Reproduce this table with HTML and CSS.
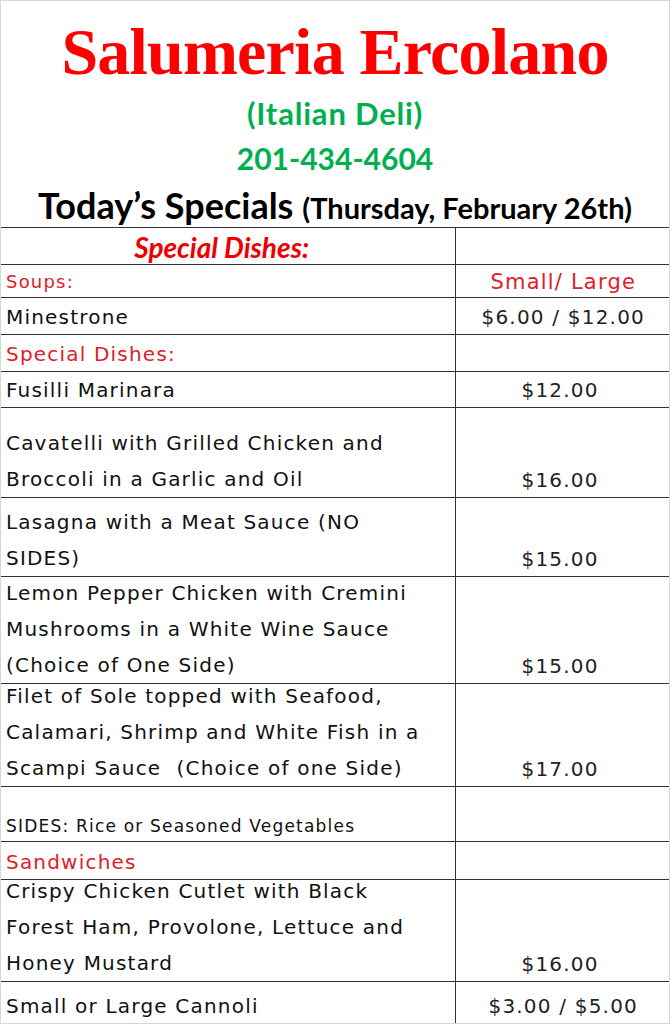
FILE: index.html
```html
<!DOCTYPE html>
<html>
<head>
<meta charset="utf-8">
<link rel="stylesheet" href="styles.css">
</head>
<body>
<div class="page">
  <header class="head">
    <h1 class="title">Salumeria Ercolano</h1>
    <p class="green deli">(Italian Deli)</p>
    <p class="green phone">201-434-4604</p>
    <p class="today">Today’s Specials <span class="date">(Thursday, February 26th)</span></p>
  </header>
  <table class="menu">
    <colgroup>
      <col class="col-name">
      <col class="col-price">
    </colgroup>
    <tr class="h37">
      <td class="cat-bold">Special Dishes:</td>
      <td></td>
    </tr>
    <tr class="h33">
      <td class="hand red sm">Soups:</td>
      <td class="hand red center lg">Small/ Large</td>
    </tr>
    <tr class="h37">
      <td class="hand">Minestrone</td>
      <td class="hand center price">$6.00 / $12.00</td>
    </tr>
    <tr class="h37">
      <td class="hand red">Special Dishes:</td>
      <td></td>
    </tr>
    <tr class="h36">
      <td class="hand">Fusilli Marinara</td>
      <td class="hand single price">$12.00</td>
    </tr>
    <tr class="h90">
      <td class="hand"><div class="lines">Cavatelli with Grilled Chicken and<br>Broccoli in a Garlic and Oil</div></td>
      <td class="hand single price">$16.00</td>
    </tr>
    <tr class="h79">
      <td class="hand"><div class="lines">Lasagna with a Meat Sauce (NO<br>SIDES)</div></td>
      <td class="hand single price">$15.00</td>
    </tr>
    <tr class="h107">
      <td class="hand"><div class="lines three">Lemon Pepper Chicken with Cremini<br>Mushrooms in a White Wine Sauce<br>(Choice of One Side)</div></td>
      <td class="hand single price">$15.00</td>
    </tr>
    <tr class="h103">
      <td class="hand"><div class="lines three">Filet of Sole topped with Seafood,<br>Calamari, Shrimp and White Fish in a<br>Scampi Sauce&nbsp; (Choice of one Side)</div></td>
      <td class="hand single price">$17.00</td>
    </tr>
    <tr class="h55">
      <td class="hand xs">SIDES: Rice or Seasoned Vegetables</td>
      <td></td>
    </tr>
    <tr class="h38">
      <td class="hand red">Sandwiches</td>
      <td></td>
    </tr>
    <tr class="h102">
      <td class="hand"><div class="lines three">Crispy Chicken Cutlet with Black<br>Forest Ham, Provolone, Lettuce and<br>Honey Mustard</div></td>
      <td class="hand single price">$16.00</td>
    </tr>
    <tr class="h42">
      <td class="hand">Small or Large Cannoli</td>
      <td class="hand center price">$3.00 / $5.00</td>
    </tr>
  </table>
</div>
</body>
</html>
```
FILE: styles.css
```css
html, body {
  margin: 0;
  padding: 0;
  background: #ffffff;
}

.page {
  width: 670px;
  height: 1024px;
  box-sizing: border-box;
  border: 1px solid #d6d6d6;
  overflow: hidden;
  display: flex;
  flex-direction: column;
}

.head {
  display: flex;
  flex-direction: column;
  align-items: center;
  height: 226px;
  flex: none;
}

.title {
  margin: 14px 0 0 0;
  font-family: "Liberation Serif", serif;
  font-weight: bold;
  font-size: 66px;
  line-height: 74px;
  color: #ff0000;
  letter-spacing: -0.8px;
}

.green {
  margin: 0;
  font-family: Lato, "Liberation Sans", sans-serif;
  font-weight: bold;
  line-height: 45px;
  color: #00b050;
}

.deli {
  margin-top: 2px;
  font-size: 31px;
  letter-spacing: 0.8px;
}

.phone {
  font-size: 30px;
}

.today {
  margin: 2px 0 0 0;
  font-family: Lato, "Liberation Sans", sans-serif;
  font-weight: bold;
  font-size: 36px;
  line-height: 45px;
  color: #000000;
}

.date {
  font-size: 29px;
}

.menu {
  width: 670px;
  border-collapse: collapse;
  table-layout: fixed;
  flex: none;
}

.col-name {
  width: 454px;
}

.menu td {
  border-top: 1px solid #333333;
  border-bottom: 1px solid #333333;
  padding: 0 0 0 5px;
  vertical-align: bottom;
  overflow: visible;
}

.menu td:first-child {
  border-right: 1px solid #333333;
}

.h33 { height: 33px; }
.h36 { height: 36px; }
.h37 { height: 37px; }
.h38 { height: 38px; }
.h42 { height: 42px; }
.h55 { height: 55px; }
.h79 { height: 79px; }
.h90 { height: 90px; }
.h102 { height: 102px; }
.h103 { height: 103px; }
.h107 { height: 107px; }

.hand {
  font-family: "DejaVu Sans", sans-serif;
  font-size: 20px;
  letter-spacing: 1.2px;
  line-height: 34px;
  color: #111111;
  white-space: nowrap;
}

.lines {
  line-height: 36px;
}

.lines.three {
  margin-top: -8px;
}

.red {
  color: #e0202a;
}

.sm {
  font-size: 18px;
  line-height: 30px;
}

.lg {
  font-size: 21px;
  line-height: 30px;
}

.xs {
  font-size: 17px;
  line-height: 30px;
}

.center {
  text-align: center;
}

.menu td.center {
  padding: 0;
}

.menu td.single {
  padding-left: 66px;
}

.price {
  color: #222222;
}

.cat-bold {
  text-align: center;
  font-family: Lato, "Liberation Sans", sans-serif;
  font-weight: bold;
  font-style: italic;
  font-size: 28px;
  line-height: 34px;
  color: #ee0000;
  vertical-align: middle;
}

.menu td.cat-bold {
  padding: 0 12px 0 0;
}
```
